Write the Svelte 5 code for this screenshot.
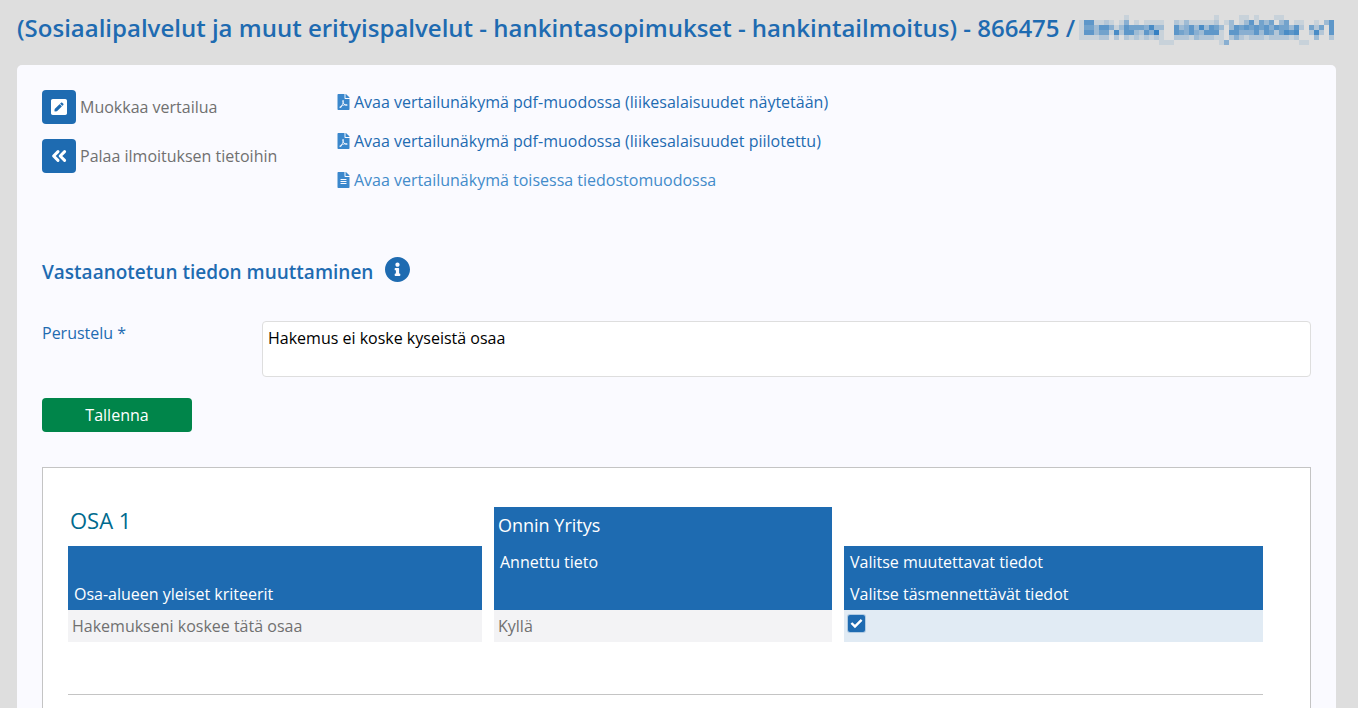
<script lang="ts">
	const documents = [
		{ label: 'Avaa vertailunäkymä pdf-muodossa (liikesalaisuudet näytetään)', icon: 'pdf' },
		{ label: 'Avaa vertailunäkymä pdf-muodossa (liikesalaisuudet piilotettu)', icon: 'pdf' },
		{ label: 'Avaa vertailunäkymä toisessa tiedostomuodossa', icon: 'text' },
	];

	// masked part of the title, one digit per tile, 0 = empty, 9 = darkest
	const mask = [
		'000000000100000000000000000100001101000110000000000',
		'166112101401011110021311111201301361535035011001036',
		'155366413655547330063463736530365656564655362052506',
		'166355172663264810065464366610664446365257670027206',
		'111122020212121210022213222110242122212222120003002',
		'000000000000000011100000000014000000000000001100000',
	];
	const tiles = mask.flatMap((row, y) =>
		[...row].map((level, x) => ({ x, y, level: Number(level) })).filter((t) => t.level > 0)
	);

	let reason = $state('Hakemus ei koske kyseistä osaa');
	let selected = $state(true);
</script>

<header class="page-header">
	<h1>(Sosiaalipalvelut ja muut erityispalvelut - hankintasopimukset - hankintailmoitus) - 866475 /</h1>
	<svg class="masked" viewBox="0 0 51 6" shape-rendering="crispEdges" aria-hidden="true">
		{#each tiles as t}
			<rect x={t.x} y={t.y} width="1" height="1" fill-opacity={t.level / 9} />
		{/each}
	</svg>
</header>

<main class="panel">
	<div class="tools">
		<div class="actions">
			<div class="action">
				<button type="button" class="icon-btn" id="edit" aria-labelledby="edit-label">
					<svg class="pen" viewBox="0 32 448 448" aria-hidden="true">
						<path d="M400 480H48c-26.5 0-48-21.5-48-48V80c0-26.5 21.5-48 48-48h352c26.5 0 48 21.5 48 48v352c0 26.5-21.5 48-48 48zM238.1 177.9L102.4 313.6l-6.3 57.1c-.8 7.6 5.6 14.1 13.3 13.3l57.1-6.3L302.2 242c2.3-2.3 2.3-6.1 0-8.5L246.7 178c-2.5-2.4-6.3-2.4-8.6-.1zM345 165.1L314.9 135c-9.4-9.4-24.6-9.4-33.9 0l-23.1 23.1c-2.3 2.3-2.3 6.1 0 8.5l55.5 55.5c2.3 2.3 6.1 2.3 8.5 0L345 199c9.3-9.3 9.3-24.5 0-33.9z" />
					</svg>
				</button>
				<label for="edit" id="edit-label">Muokkaa vertailua</label>
			</div>
			<div class="action">
				<button type="button" class="icon-btn" id="back" aria-labelledby="back-label">
					<svg class="chevrons" viewBox="0 0 16 14" aria-hidden="true">
						<path d="M7 2.6L2.6 7l4.4 4.4M13.6 2.6L9.2 7l4.4 4.4" />
					</svg>
				</button>
				<label for="back" id="back-label">Palaa ilmoituksen tietoihin</label>
			</div>
		</div>

		<ul class="documents">
			{#each documents as doc}
				<li>
					<a href="#doc" class:light={doc.icon === 'text'}>
						<svg class="file" viewBox="0 0 384 512" aria-hidden="true">
							{#if doc.icon === 'pdf'}
								<path d="M181.9 256.1c-5-16-4.9-46.9-2-46.9 8.4 0 7.6 36.9 2 46.9zm-1.7 47.2c-7.7 20.2-17.3 43.3-28.4 62.7 18.3-7 39-17.2 62.9-21.9-12.7-9.6-24.9-23.4-34.5-40.8zM86.1 428.1c0 .8 13.2-5.4 34.9-40.2-6.7 6.3-29.1 24.5-34.9 40.2zM248 160h136v328c0 13.3-10.7 24-24 24H24c-13.3 0-24-10.7-24-24V24C0 10.7 10.7 0 24 0h200v136c0 13.2 10.8 24 24 24zm-8 171.8c-20-12.2-33.3-29-42.7-53.8 4.5-18.5 11.6-46.6 6.2-64.2-4.7-29.4-42.4-26.5-47.8-6.8-5 18.3-.4 44.1 8.1 77-11.6 27.6-28.7 64.6-40.8 85.8-.1 0-.1.1-.2.1-27.1 13.9-73.6 44.5-54.5 68 5.6 6.9 16 10 21.5 10 17.9 0 35.7-18 61.1-61.8 25.8-8.5 54.1-19.1 79-23.2 21.7 11.8 47.1 19.5 64 19.5 29.2 0 31.2-32 19.7-43.4-13.9-13.6-54.3-9.7-73.6-7.2zM377 105L279 7c-4.5-4.5-10.6-7-17-7h-6v128h128v-6.1c0-6.3-2.5-12.4-7-16.9zm-74.1 255.3c4.1-2.7-2.5-11.9-42.8-9 37.1 15.8 42.8 9 42.8 9z" />
							{:else}
								<path d="M224 136V0H24C10.7 0 0 10.7 0 24v464c0 13.3 10.7 24 24 24h336c13.3 0 24-10.7 24-24V160H248c-13.2 0-24-10.8-24-24zm64 236c0 6.6-5.4 12-12 12H108c-6.6 0-12-5.4-12-12v-8c0-6.6 5.4-12 12-12h168c6.6 0 12 5.4 12 12v8zm0-64c0 6.6-5.4 12-12 12H108c-6.6 0-12-5.4-12-12v-8c0-6.6 5.4-12 12-12h168c6.6 0 12 5.4 12 12v8zm0-72v8c0 6.6-5.4 12-12 12H108c-6.6 0-12-5.4-12-12v-8c0-6.6 5.4-12 12-12h168c6.6 0 12 5.4 12 12zm96-114.1v6.1H256V0h6.1c6.4 0 12.5 2.5 17 7l97.9 98c4.5 4.5 7 10.6 7 16.9z" />
							{/if}
						</svg>
						{doc.label}
					</a>
				</li>
			{/each}
		</ul>
	</div>

	<div class="section-title">
		<h2>Vastaanotetun tiedon muuttaminen</h2>
		<button type="button" class="info" aria-label="Ohje">
			<svg viewBox="8 8 496 496" aria-hidden="true">
				<path d="M256 8C119.043 8 8 119.083 8 256c0 136.997 111.043 248 248 248s248-111.003 248-248C504 119.083 392.957 8 256 8zm0 110c23.196 0 42 18.804 42 42s-18.804 42-42 42-42-18.804-42-42 18.804-42 42-42zm56 254c0 6.627-5.373 12-12 12h-88c-6.627 0-12-5.373-12-12v-24c0-6.627 5.373-12 12-12h12v-64h-12c-6.627 0-12-5.373-12-12v-24c0-6.627 5.373-12 12-12h64c6.627 0 12 5.373 12 12v100h12c6.627 0 12 5.373 12 12v24z" />
			</svg>
		</button>
	</div>

	<form onsubmit={(e) => e.preventDefault()}>
		<div class="field">
			<label for="reason">Perustelu *</label>
			<textarea id="reason" bind:value={reason} required></textarea>
		</div>
		<button type="submit" class="save">Tallenna</button>
	</form>

	<section class="lot">
		<table>
			<colgroup>
				<col class="col-criteria" />
				<col class="col-company" />
				<col />
			</colgroup>
			<thead>
				<tr class="company-row">
					<th class="lot-name">OSA 1</th>
					<th class="company filled">Onnin Yritys</th>
					<td></td>
				</tr>
				<tr>
					<td class="filled"></td>
					<th class="filled">Annettu tieto</th>
					<th class="filled">Valitse muutettavat tiedot</th>
				</tr>
				<tr>
					<th class="filled">Osa-alueen yleiset kriteerit</th>
					<td class="filled"></td>
					<th class="filled">Valitse täsmennettävät tiedot</th>
				</tr>
			</thead>
			<tbody>
				<tr>
					<td>Hakemukseni koskee tätä osaa</td>
					<td>Kyllä</td>
					<td class="pick">
						<input type="checkbox" bind:checked={selected} aria-label="Valitse: Hakemukseni koskee tätä osaa" />
					</td>
				</tr>
			</tbody>
		</table>
		<hr />
	</section>
</main>

<style>
	:global(body) {
		margin: 0;
		background: #dedede;
		color: #707070;
		font-family: 'Open Sans', 'Noto Sans', sans-serif;
		font-size: 16px;
		line-height: 24px;
	}

	button,
	textarea {
		font: inherit;
	}

	/* ── Page title ── */
	.page-header {
		display: flex;
		align-items: flex-end;
		gap: 4px;
		padding: 11px 22px 20px 17px;
	}

	h1 {
		margin: 0;
		color: #1e6bb1;
		font-size: 24px;
		font-weight: 600;
		line-height: 34px;
	}

	.masked {
		flex: none;
		width: 255px;
		height: 30px;
		fill: #1e74bf;
	}

	.panel {
		margin: 0 22px 0 17px;
		padding: 25px 25px 0;
		background: #fafaff;
		border-radius: 5px 5px 0 0;
	}

	/* ── Actions and document links ── */
	.tools {
		display: flex;
	}

	.actions {
		display: flex;
		flex-direction: column;
		gap: 15px;
		width: 295px;
	}

	.action {
		display: flex;
		align-items: center;
		gap: 4px;
	}

	.icon-btn {
		display: flex;
		align-items: center;
		justify-content: center;
		width: 34px;
		height: 34px;
		padding: 0;
		border: 0;
		border-radius: 4px;
		background: #1e6bb1;
		cursor: pointer;
	}

	.pen {
		width: 16px;
		height: 16px;
		fill: #fff;
	}

	.chevrons {
		width: 16px;
		height: 14px;
		fill: none;
		stroke: #fff;
		stroke-width: 3;
		stroke-linecap: round;
		stroke-linejoin: round;
	}

	.documents {
		display: flex;
		flex-direction: column;
		gap: 15px;
		margin: 0;
		padding: 0;
		list-style: none;
	}

	.documents a {
		display: flex;
		align-items: center;
		gap: 4px;
		color: #1e6bb1;
		text-decoration: none;
	}

	.documents a.light {
		color: #428bca;
	}

	.file {
		width: 13px;
		height: 16px;
		fill: #3a87cc;
	}

	/* ── Form ── */
	.section-title {
		display: flex;
		align-items: flex-start;
		gap: 12px;
		margin: 65px 0 34px;
	}

	h2 {
		margin: 0;
		color: #1e6bb1;
		font-size: 19px;
		font-weight: 600;
		line-height: 30px;
	}

	.info {
		display: block;
		width: 25px;
		height: 25px;
		padding: 0;
		border: 0;
		background: none;
		cursor: pointer;
	}

	.info svg {
		display: block;
		fill: #1e6bb1;
	}

	.field {
		display: flex;
	}

	.field label {
		width: 220px;
		color: #1e6bb1;
	}

	textarea {
		flex: 1;
		box-sizing: border-box;
		height: 56px;
		padding: 4px 5px;
		border: 1px solid #dedede;
		border-radius: 4px;
		background: #fff;
		color: #000;
		resize: none;
	}

	.save {
		display: block;
		width: 150px;
		height: 34px;
		margin: 21px 0 35px;
		padding: 0;
		border: 0;
		border-radius: 4px;
		background: #00854a;
		color: #fff;
		cursor: pointer;
	}

	/* ── Criteria table ── */
	.lot {
		padding: 39px 47px 39px 25px;
		border: 1px solid #c4c4c4;
		background: #fff;
	}

	table {
		width: 100%;
		table-layout: fixed;
		border-spacing: 0;
	}

	.col-criteria {
		width: 414px;
	}

	.col-company {
		width: 350px;
	}

	th,
	td {
		box-sizing: border-box;
		height: 32px;
		padding: 0 6px;
		font-weight: 400;
		text-align: left;
	}

	th + th,
	th + td,
	td + th,
	td + td {
		border-left: 12px solid #fff;
	}

	.filled {
		background: #1e6bb1;
		color: #fff;
	}

	.company-row > * {
		height: 39px;
		vertical-align: top;
	}

	.lot-name {
		padding: 0 2px;
		color: #006a8e;
		font-size: 22px;
		line-height: 26px;
	}

	.company {
		padding: 0 4px;
		font-size: 18px;
		line-height: 36px;
	}

	tbody td {
		padding: 0 4px;
		background: #f3f3f5;
	}

	tbody .pick {
		background: #e1ebf4;
	}

	input[type='checkbox'] {
		appearance: none;
		display: block;
		width: 17px;
		height: 17px;
		margin: 0 0 5px;
		border-radius: 2px;
		background: #fff;
		box-shadow: 0 0 0 1px #1e6bb140;
	}

	input[type='checkbox']:checked {
		background: #1e6bb1;
	}

	input[type='checkbox']:checked::before {
		content: '';
		display: block;
		width: 17px;
		height: 17px;
		background: #fff;
		clip-path: polygon(15% 52%, 25% 42%, 41% 58%, 75% 24%, 85% 34%, 41% 78%);
	}

	hr {
		margin: 52px 0 0;
		border: 0;
		border-top: 1px solid #c4c4c4;
	}
</style>
